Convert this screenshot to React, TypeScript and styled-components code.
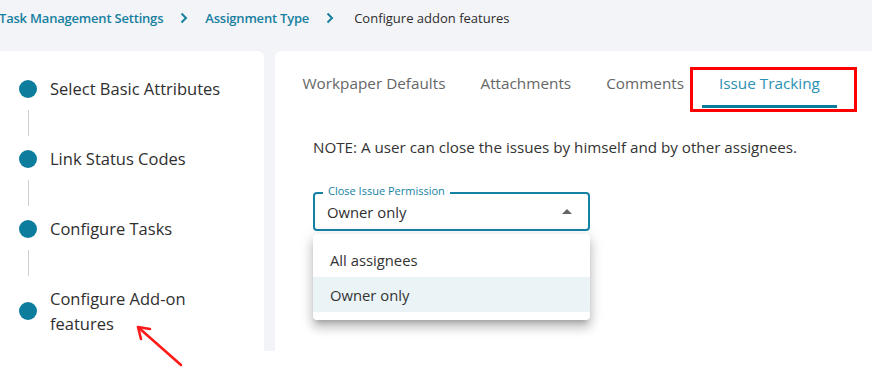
import React from "react";
import styled, { createGlobalStyle } from "styled-components";

const Global = createGlobalStyle`
  html, body { margin: 0; padding: 0; background: #ffffff; }
  body { font-family: "Open Sans", "Noto Sans", Arial, sans-serif; color: #333; }
  * { box-sizing: border-box; }
`;

const Screen = styled.div`
  position: relative;
  width: 872px;
  height: 368px;
  overflow: hidden;
  background: #fff;
`;

const Page = styled.div`
  width: 872px;
  height: 351px;
  background: #f3f4f8;
  display: flex;
  flex-direction: column;
`;

const Breadcrumb = styled.nav`
  height: 51px;
  display: flex;
  align-items: center;
  gap: 17px;
  margin-left: -1px;
  padding-bottom: 16px;
  font-size: 13px;
  white-space: nowrap;
`;

const Crumb = styled.span<{ $current?: boolean }>`
  color: ${(p) => (p.$current ? "#2d2d2d" : "#17809f")};
  font-weight: ${(p) => (p.$current ? 400 : 600)};
  letter-spacing: ${(p) => (p.$current ? "0" : "-0.2px")};
  margin-left: ${(p) => (p.$current ? "3px" : "0")};
`;

const Chevron = styled.svg`
  width: 8px;
  height: 12px;
  flex: none;
`;

const Main = styled.div`
  flex: 1;
  display: flex;
  gap: 11px;
  min-height: 0;
`;

const Sidebar = styled.aside`
  width: 264px;
  flex: none;
  background: #fff;
  border-radius: 0 6px 0 0;
  padding: 25px 20px 0 19px;
  display: flex;
  flex-direction: column;
`;

const Step = styled.div`
  display: flex;
  align-items: center;
  gap: 13px;
`;

const Dot = styled.span`
  width: 18px;
  height: 18px;
  border-radius: 50%;
  background: #0d7d9e;
  flex: none;
`;

const StepLabel = styled.span`
  font-size: 16.5px;
  line-height: 25px;
  color: #2f2f2f;
  max-width: 178px;
`;

const Connector = styled.div`
  width: 1px;
  height: 26px;
  margin: 9px 0 10px 9px;
  background: #cfcfcf;
`;

const Content = styled.section`
  flex: 1;
  background: #fff;
  border-radius: 6px 0 0 0;
  display: flex;
  flex-direction: column;
`;

const TabBar = styled.div`
  display: flex;
  padding: 0 10px;
`;

const Tab = styled.div<{ $active?: boolean }>`
  position: relative;
  padding: 20px 17.5px 10px;
  font-size: 15.3px;
  line-height: 24px;
  color: ${(p) => (p.$active ? "#2a90b3" : "#666")};
  border-bottom: 3px solid ${(p) => (p.$active ? "#0d7b9c" : "transparent")};
  white-space: nowrap;
`;

const Highlight = styled.span`
  position: absolute;
  left: -12px;
  right: -20px;
  top: 16px;
  bottom: -7px;
  border: 3px solid #ff0000;
  pointer-events: none;
`;

const Body = styled.div`
  padding: 27px 38px 0;
  display: flex;
  flex-direction: column;
  align-items: flex-start;
`;

const Note = styled.p`
  margin: 0;
  font-size: 15.2px;
  line-height: 24px;
  color: #333;
`;

const Field = styled.div`
  position: relative;
  margin-top: 33px;
  width: 277px;
`;

const SelectBox = styled.div`
  height: 39px;
  border: 2px solid #1582a4;
  border-radius: 4px;
  display: flex;
  align-items: center;
  justify-content: space-between;
  padding: 0 16px 0 12px;
  font-size: 14.8px;
  color: #2f2f2f;
`;

const FieldLabel = styled.span`
  position: absolute;
  left: 10px;
  top: -9px;
  padding: 0 5px;
  background: #fff;
  font-size: 11px;
  line-height: 16px;
  color: #1582a4;
`;

const Caret = styled.span`
  width: 0;
  height: 0;
  border-left: 5px solid transparent;
  border-right: 5px solid transparent;
  border-bottom: 5px solid #666;
  margin-top: -1px;
`;

const Menu = styled.ul`
  position: absolute;
  left: 0;
  right: 0;
  top: 42px;
  margin: 0;
  padding: 8px 0;
  list-style: none;
  background: #fff;
  border-radius: 4px;
  box-shadow: 0 5px 5px -3px rgba(0, 0, 0, 0.2), 0 8px 10px 1px rgba(0, 0, 0, 0.14),
    0 3px 14px 2px rgba(0, 0, 0, 0.12);
  z-index: 2;
`;

const MenuItem = styled.li<{ $selected?: boolean }>`
  height: 35px;
  display: flex;
  align-items: center;
  padding-left: 17px;
  font-size: 14.8px;
  color: #333;
  background: ${(p) => (p.$selected ? "#eaf3f6" : "transparent")};
`;

const Annotation = styled.svg`
  position: absolute;
  left: 130px;
  top: 318px;
  width: 60px;
  height: 50px;
  overflow: visible;
  pointer-events: none;
  z-index: 5;
`;

const ChevronIcon = () => (
  <Chevron viewBox="0 0 8 12">
    <path d="M1.5 1.5 L6 6 L1.5 10.5" fill="none" stroke="#17809f" strokeWidth="2" />
  </Chevron>
);

const steps = ["Select Basic Attributes", "Link Status Codes", "Configure Tasks", "Configure Add-on features"];
const tabs = ["Workpaper Defaults", "Attachments", "Comments", "Issue Tracking"];

export default function App() {
  return (
    <>
      <Global />
      <Screen>
        <Page>
          <Breadcrumb>
            <Crumb>Task Management Settings</Crumb>
            <ChevronIcon />
            <Crumb>Assignment Type</Crumb>
            <ChevronIcon />
            <Crumb $current>Configure addon features</Crumb>
          </Breadcrumb>
          <Main>
            <Sidebar>
              {steps.map((s, i) => (
                <React.Fragment key={s}>
                  {i > 0 && <Connector />}
                  <Step>
                    <Dot />
                    <StepLabel>{s}</StepLabel>
                  </Step>
                </React.Fragment>
              ))}
            </Sidebar>
            <Content>
              <TabBar>
                {tabs.map((t, i) => (
                  <Tab key={t} $active={i === 3}>
                    {t}
                    {i === 3 && <Highlight />}
                  </Tab>
                ))}
              </TabBar>
              <Body>
                <Note>NOTE: A user can close the issues by himself and by other assignees.</Note>
                <Field>
                  <FieldLabel>Close Issue Permission</FieldLabel>
                  <SelectBox>
                    <span>Owner only</span>
                    <Caret />
                  </SelectBox>
                  <Menu>
                    <MenuItem>All assignees</MenuItem>
                    <MenuItem $selected>Owner only</MenuItem>
                  </Menu>
                </Field>
              </Body>
            </Content>
          </Main>
        </Page>
        <Annotation viewBox="0 0 60 50">
          <path d="M51 47 L9 10" stroke="#ff1a1a" strokeWidth="2.6" fill="none" strokeLinecap="round" />
          <path d="M20 11 L8 9 L11 21" stroke="#ff1a1a" strokeWidth="2.6" fill="none" strokeLinecap="round" strokeLinejoin="round" />
        </Annotation>
      </Screen>
    </>
  );
}
